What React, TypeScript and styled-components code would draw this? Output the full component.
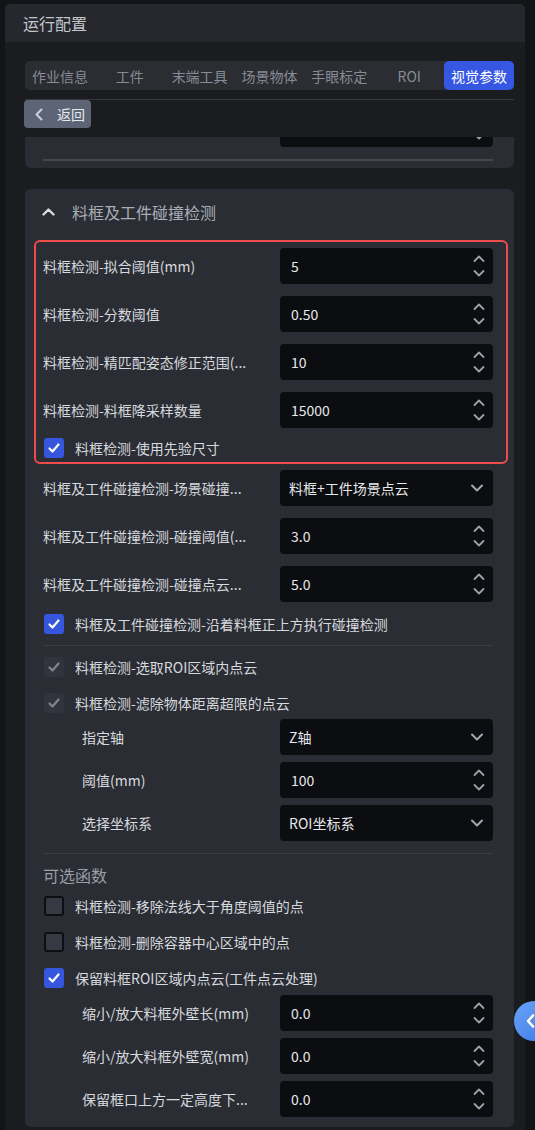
import React from "react";
import styled, { createGlobalStyle } from "styled-components";

const GlobalStyle = createGlobalStyle`
  html, body { margin: 0; padding: 0; background: #131417; }
  body { font-family: "Noto Sans CJK SC", "Noto Sans", sans-serif; overflow: hidden; }
  * { box-sizing: border-box; }
`;

const Panel = styled.div`
  margin: 4px 0 0 5px;
  width: 520px;
  height: 1126px;
  background: #1b1c20;
  border-radius: 5px 5px 0 0;
  display: flex;
  flex-direction: column;
  overflow: hidden;
`;

const Header = styled.div`
  height: 38px;
  flex-shrink: 0;
  background: #26282d;
  display: flex;
  align-items: center;
  padding-left: 18px;
  font-size: 16px;
  color: #c3c6cc;
`;

const Body = styled.div`
  flex: 1;
  min-height: 0;
  display: flex;
  flex-direction: column;
  padding: 19px 11px 0 20px;
`;

const Tabs = styled.div`
  display: grid;
  grid-template-columns: repeat(7, 1fr);
  height: 29px;
  background: #2b2d33;
  border-radius: 5px;
  flex-shrink: 0;
`;

const Tab = styled.div<{ $active?: boolean }>`
  display: flex;
  align-items: center;
  justify-content: center;
  font-size: 14px;
  white-space: nowrap;
  color: ${(p) => (p.$active ? "#ffffff" : "#868b95")};
  background: ${(p) => (p.$active ? "#3557e2" : "transparent")};
  border-radius: 5px;
`;

const Rule = styled.div`
  margin-top: 9px;
  height: 1px;
  background: #35373d;
  flex-shrink: 0;
`;

const BackButton = styled.button`
  align-self: flex-start;
  height: 28px;
  width: 67px;
  margin-left: -1px;
  padding: 0 0 0 11px;
  border: none;
  border-radius: 4px;
  background: #5c6476;
  color: #e6e8ec;
  font-family: inherit;
  font-size: 14px;
  display: flex;
  align-items: center;
  gap: 14px;
  flex-shrink: 0;
`;

const Viewport = styled.div`
  margin-top: 9px;
  flex: 1;
  min-height: 0;
  overflow: hidden;
  display: flex;
  flex-direction: column;
  gap: 21px;
`;

const Card = styled.div`
  background: #2b2d34;
  border-radius: 6px;
  flex-shrink: 0;
`;

const ClippedCard = styled(Card)`
  margin-top: -36px;
  padding: 10px 21px 7px 18px;
`;

const CardHeader = styled.div`
  height: 46px;
  display: flex;
  align-items: center;
  gap: 17px;
  padding-left: 17px;
  font-size: 16px;
  color: #a9adb6;
`;

const CardContent = styled.div`
  padding: 0 21px 10px 18px;
  display: flex;
  flex-direction: column;
`;

const Highlight = styled.div`
  margin: 5px -15px 0 -9px;
  border: 2px solid #ee4b4b;
  border-radius: 6px;
  padding: 0 13px 0 7px;
  display: flex;
  flex-direction: column;
`;

const Row = styled.div<{ $h?: number }>`
  height: ${(p) => p.$h ?? 48}px;
  display: flex;
  align-items: center;
  gap: 15px;
`;

const Label = styled.div<{ $indent?: boolean }>`
  flex: 1;
  min-width: 0;
  padding-left: ${(p) => (p.$indent ? 39 : 0)}px;
  font-size: 14px;
  color: #d6d9de;
  white-space: nowrap;
  overflow: hidden;
  text-overflow: ellipsis;
`;

const Control = styled.div<{ $select?: boolean }>`
  width: 213px;
  height: 36px;
  flex-shrink: 0;
  background: #0c0d10;
  border-radius: 4px;
  display: flex;
  align-items: center;
  justify-content: space-between;
  padding: ${(p) => (p.$select ? "0 10px 0 9px" : "0 8px 0 11px")};
  font-size: 14px;
  color: #e6e8eb;
`;

const Divider = styled.div<{ $top: number; $thick?: boolean }>`
  margin-top: ${(p) => p.$top}px;
  height: ${(p) => (p.$thick ? 2 : 1)}px;
  background: ${(p) => (p.$thick ? "#45484f" : "#3b3e45")};
`;

const CheckList = styled.div<{ $top?: number }>`
  margin-top: ${(p) => p.$top ?? 0}px;
  display: flex;
  flex-direction: column;
  gap: 4px;
`;

const CheckRow = styled.div<{ $h?: number }>`
  height: ${(p) => p.$h ?? 32}px;
  display: flex;
  align-items: center;
  gap: 11px;
  padding-left: 1px;
  font-size: 14px;
  color: #d6d9de;
  white-space: nowrap;
`;

const Box = styled.span<{ $state: "on" | "off" | "disabled" }>`
  width: 20px;
  height: 20px;
  flex-shrink: 0;
  border-radius: 3px;
  display: flex;
  align-items: center;
  justify-content: center;
  background: ${(p) =>
    p.$state === "on" ? "#3556dd" : p.$state === "disabled" ? "#31343c" : "#363944"};
  border: ${(p) => (p.$state === "off" ? "2px solid #0d0e11" : "none")};
  color: ${(p) => (p.$state === "on" ? "#ffffff" : "#80848e")};
`;

const Nested = styled.div<{ $top?: number }>`
  margin-top: ${(p) => p.$top ?? 0}px;
  display: flex;
  flex-direction: column;
  gap: 7px;
`;

const SubTitle = styled.div`
  margin-top: 9px;
  line-height: 24px;
  font-size: 16px;
  color: #9a9ea7;
`;

const FloatButton = styled.div`
  position: fixed;
  left: 514px;
  top: 1001px;
  width: 40px;
  height: 40px;
  border-radius: 50%;
  background: linear-gradient(135deg, #6aa5f7, #3b78e6);
  display: flex;
  align-items: center;
  padding-left: 12px;
  color: #ffffff;
`;

const Spinner = () => (
  <svg width="12" height="28" viewBox="0 0 12 28" fill="none" stroke="#9da1aa" strokeWidth="1.8" strokeLinecap="round" strokeLinejoin="round">
    <polyline points="1.5,9 6,4.5 10.5,9" />
    <polyline points="1.5,19 6,23.5 10.5,19" />
  </svg>
);

const ChevronDown = () => (
  <svg width="12" height="8" viewBox="0 0 12 8" fill="none" stroke="#a3a7b0" strokeWidth="2" strokeLinecap="round" strokeLinejoin="round">
    <polyline points="1,1.5 6,6.5 11,1.5" />
  </svg>
);

const Check = () => (
  <svg width="14" height="14" viewBox="0 0 14 14" fill="none" stroke="currentColor" strokeWidth="2.2" strokeLinecap="round" strokeLinejoin="round">
    <polyline points="2.5,7.5 5.5,10.5 11.5,3.5" />
  </svg>
);

type NumProps = { label: string; value: string; indent?: boolean; h?: number };
const NumberRow = ({ label, value, indent, h }: NumProps) => (
  <Row $h={h}>
    <Label $indent={indent}>{label}</Label>
    <Control>
      <span>{value}</span>
      <Spinner />
    </Control>
  </Row>
);

const SelectRow = ({ label, value, indent, h }: NumProps) => (
  <Row $h={h}>
    <Label $indent={indent}>{label}</Label>
    <Control $select>
      <span>{value}</span>
      <ChevronDown />
    </Control>
  </Row>
);

const CheckItem = ({ label, state, h }: { label: string; state: "on" | "off" | "disabled"; h?: number }) => (
  <CheckRow $h={h}>
    <Box $state={state}>{state !== "off" && <Check />}</Box>
    <span>{label}</span>
  </CheckRow>
);

const tabs = ["作业信息", "工件", "末端工具", "场景物体", "手眼标定", "ROI", "视觉参数"];

export default function App() {
  return (
    <>
      <GlobalStyle />
      <Panel>
        <Header>运行配置</Header>
        <Body>
          <Tabs>
            {tabs.map((t) => (
              <Tab key={t} $active={t === "视觉参数"}>
                {t}
              </Tab>
            ))}
          </Tabs>
          <Rule />
          <BackButton>
            <svg width="8" height="13" viewBox="0 0 8 13" fill="none" stroke="#cdd0d6" strokeWidth="2" strokeLinecap="round" strokeLinejoin="round">
              <polyline points="6.5,1.5 1.5,6.5 6.5,11.5" />
            </svg>
            返回
          </BackButton>
          <Viewport>
            <ClippedCard>
              <Row $h={36}>
                <Label />
                <Control>
                  <span />
                  <Spinner />
                </Control>
              </Row>
              <Divider $top={12} $thick />
            </ClippedCard>

            <Card>
              <CardHeader>
                <svg width="13" height="8" viewBox="0 0 13 8" fill="none" stroke="#d8dbe0" strokeWidth="2.4" strokeLinecap="round" strokeLinejoin="round">
                  <polyline points="1.5,6.5 6.5,1.5 11.5,6.5" />
                </svg>
                料框及工件碰撞检测
              </CardHeader>
              <CardContent>
                <Highlight>
                  <NumberRow label="料框检测-拟合阈值(mm)" value="5" />
                  <NumberRow label="料框检测-分数阈值" value="0.50" />
                  <NumberRow label="料框检测-精匹配姿态修正范围(..." value="10" />
                  <NumberRow label="料框检测-料框降采样数量" value="15000" />
                  <CheckItem label="料框检测-使用先验尺寸" state="on" h={28} />
                </Highlight>
                <SelectRow label="料框及工件碰撞检测-场景碰撞..." value="料框+工件场景点云" />
                <NumberRow label="料框及工件碰撞检测-碰撞阈值(..." value="3.0" />
                <NumberRow label="料框及工件碰撞检测-碰撞点云..." value="5.0" />
                <CheckItem label="料框及工件碰撞检测-沿着料框正上方执行碰撞检测" state="on" />
                <Divider $top={5} />
                <CheckList $top={5}>
                  <CheckItem label="料框检测-选取ROI区域内点云" state="disabled" />
                  <CheckItem label="料框检测-滤除物体距离超限的点云" state="disabled" />
                </CheckList>
                <Nested>
                  <SelectRow label="指定轴" value="Z轴" indent h={36} />
                  <NumberRow label="阈值(mm)" value="100" indent h={36} />
                  <SelectRow label="选择坐标系" value="ROI坐标系" indent h={36} />
                </Nested>
                <Divider $top={12} />
                <SubTitle>可选函数</SubTitle>
                <CheckList $top={3}>
                  <CheckItem label="料框检测-移除法线大于角度阈值的点" state="off" />
                  <CheckItem label="料框检测-删除容器中心区域中的点" state="off" />
                  <CheckItem label="保留料框ROI区域内点云(工件点云处理)" state="on" />
                </CheckList>
                <Nested $top={1}>
                  <NumberRow label="缩小/放大料框外壁长(mm)" value="0.0" indent h={36} />
                  <NumberRow label="缩小/放大料框外壁宽(mm)" value="0.0" indent h={36} />
                  <NumberRow label="保留框口上方一定高度下..." value="0.0" indent h={36} />
                </Nested>
              </CardContent>
            </Card>
          </Viewport>
        </Body>
      </Panel>
      <FloatButton>
        <svg width="9" height="14" viewBox="0 0 9 14" fill="none" stroke="#ffffff" strokeWidth="2.6" strokeLinecap="round" strokeLinejoin="round">
          <polyline points="7,1.5 2,7 7,12.5" />
        </svg>
      </FloatButton>
    </>
  );
}
